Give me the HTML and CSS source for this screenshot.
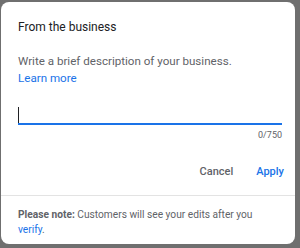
FILE: index.html
```html
<!DOCTYPE html>
<html>
<head>
<meta charset="utf-8">
<link rel="stylesheet" href="styles.css">
</head>
<body>
<div class="dialog">
  <div class="main">
    <h1 class="title">From the business</h1>
    <p class="desc">Write a brief description of your business.<br><a class="link" href="#">Learn more</a></p>
    <div class="field"><span class="caret"></span></div>
    <div class="counter">0/750</div>
    <div class="actions">
      <button class="btn cancel">Cancel</button>
      <button class="btn apply">Apply</button>
    </div>
  </div>
  <div class="note"><b>Please note:</b> Customers will see your edits after you <a class="link" href="#">verify</a>.</div>
</div>
</body>
</html>
```
FILE: styles.css
```css
html, body { margin: 0; padding: 0; }
body {
  width: 300px; height: 248px; background: #6f6f6f;
  font-family: Roboto, "Liberation Sans", Arial, sans-serif;
  padding: 2px 5px 4px 1px; box-sizing: border-box;
}
.dialog {
  background: #fff; border-radius: 8px; height: 100%;
  display: flex; flex-direction: column; overflow: hidden;
}
.main { padding: 0 13px 0 17px; }
.title {
  margin: 0; padding-top: 17px; font-size: 12px; font-weight: 400;
  color: #202124; line-height: 17px;
}
.desc {
  margin: 17px 0 0; font-size: 11.6px; line-height: 17px; color: #5f6368;
}
.link { color: #1a73e8; text-decoration: none; }
.field {
  margin-top: 20px; height: 16px; border-bottom: 2px solid #1a73e8;
  display: flex;
}
.caret { width: 1px; background: #202124; }
.counter {
  text-align: right; font-size: 9px; color: #5f6368; margin-top: 4px; line-height: 12px;
}
.actions { display: flex; justify-content: flex-end; gap: 23px; margin: 23px -2px 0 0; }
.btn {
  border: 0; background: none; padding: 0; font-family: inherit;
  font-size: 11px; font-weight: 500; line-height: 16px; cursor: pointer;
}
.cancel { color: #5f6368; }
.apply { color: #1a73e8; }
.note {
  margin-top: 15px; border-top: 1px solid #e3e3e3;
  padding: 11px 24px 0 17px; font-size: 10.2px; line-height: 15px; color: #5f6368;
}
.note b { color: #5f6368; font-weight: 700; }
```
